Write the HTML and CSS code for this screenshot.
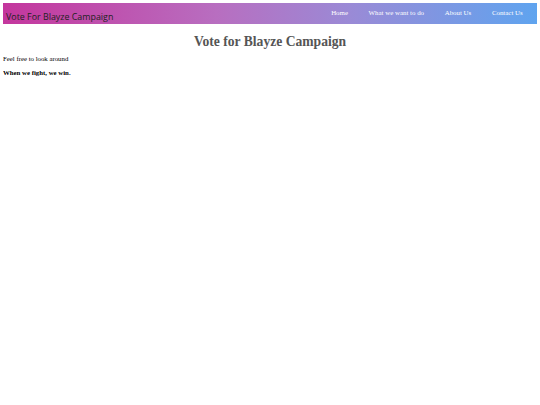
FILE: index.html
```html
<!DOCTYPE html>
<html>
<head>
<meta charset="utf-8">
<link rel="stylesheet" href="styles.css">
</head>
<body>
<nav class="topnav">
  <div class="brand">Vote For Blayze Campaign</div>
  <ul class="links">
    <li><a href="#">Home</a></li>
    <li><a href="#">What we want to do</a></li>
    <li><a href="#">About Us</a></li>
    <li><a href="#">Contact Us</a></li>
  </ul>
</nav>
<h1 class="title">Vote for Blayze Campaign</h1>
<p class="intro">Feel free to look around</p>
<p class="motto"><strong>When we fight, we win.</strong></p>
</body>
</html>
```
FILE: styles.css
```css
html, body {
  background: #fff;
}
body {
  margin: 3px;
  font-family: "Liberation Serif", "Times New Roman", serif;
  font-size: 6.8px;
  color: #000;
}
.topnav {
  display: flex;
  align-items: stretch;
  justify-content: space-between;
  height: 21px;
  background: linear-gradient(to right, #c4369d 0%, #b86ec0 40%, #9a8ad6 65%, #5fa4ef 100%);
}
.brand {
  font-family: "Open Sans", "Noto Sans", sans-serif;
  font-size: 8.9px;
  color: #222;
  padding-left: 3px;
  align-self: flex-end;
  line-height: 1;
  padding-bottom: 2px;
}
.links {
  list-style: none;
  margin: 0;
  padding: 0 4px 0 0;
  display: flex;
  align-items: flex-start;
}
.links li a {
  display: block;
  color: #fff;
  text-decoration: none;
  font-size: 6.9px;
  padding: 7px 10.3px;
  line-height: 1;
}
.title {
  text-align: center;
  font-size: 13.6px;
  color: #555;
  margin: 10px 0 5px;
  line-height: 1.15;
}
.intro {
  margin: 0 0 7px;
  line-height: 1.15;
}
.motto {
  margin: 0;
  line-height: 1.15;
}
```
